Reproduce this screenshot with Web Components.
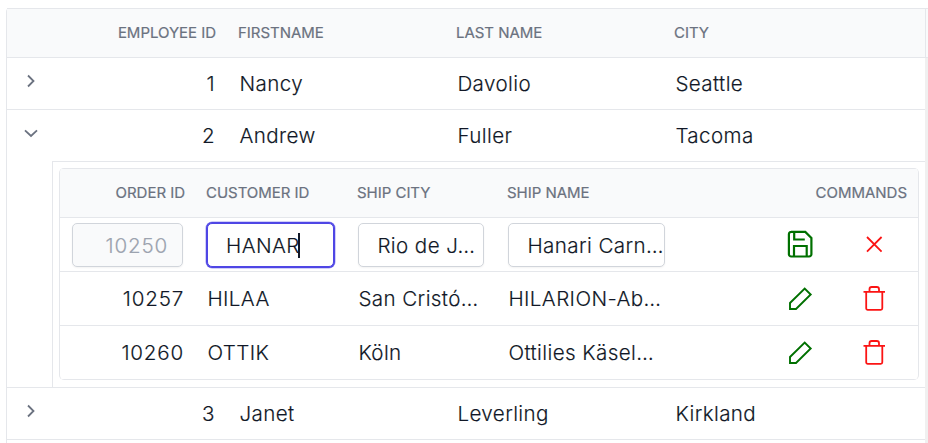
<!DOCTYPE html>
<html lang="en">
<head>
<meta charset="utf-8">
<title>Employees</title>
<style>
html,body{margin:0;height:443px;overflow:hidden;background:#fff;font-family:Inter,"Liberation Sans",sans-serif;color:#111827}
</style>
</head>
<body>
<employee-view></employee-view>
<script>
const define=(name,html)=>customElements.define(name,class extends HTMLElement{
  constructor(){super();this.attachShadow({mode:'open'}).innerHTML=html;}
});

define('grid-head',`<style>
:host{display:grid;grid-template-columns:var(--cols);align-items:center;height:48px;background:#f9fafb;border-top:1px solid #e5e7eb;border-bottom:1px solid #e5e7eb;color:#6b7280;font-size:15px;font-weight:400;-webkit-text-stroke:.2px currentColor;line-height:20px;letter-spacing:-.03px}
</style><slot></slot>`);

define('grid-row',`<style>
:host{display:grid;grid-template-columns:var(--cols);align-items:center;height:var(--row-h);border-bottom:1px solid #e5e7eb;font-size:20.6px;font-weight:300;-webkit-text-stroke:.15px currentColor;line-height:28px;letter-spacing:.4px}
:host([open]){border-bottom-color:transparent}
</style><slot></slot>`);

define('grid-cell',`<style>
:host{display:block;white-space:nowrap;min-width:0;padding-left:var(--inset,0)}
:host([num]){text-align:right;padding:0 var(--num-pad,0) 0 0;letter-spacing:var(--num-spacing,inherit)}
:host([end]){text-align:right;padding:0}
</style><slot></slot>`);

define('edit-box',`<style>
:host{display:flex;align-items:center;box-sizing:border-box;height:44px;width:var(--w);margin:1px 0 0 var(--ml,0);padding:1px 0 0 18.4px;border:1px solid #d1d5db;border-radius:5px;background:#fff;box-shadow:0 1px 2px rgba(0,0,0,.05);white-space:nowrap}
:host([disabled]){background:#f9fafb;color:#9ca3af;justify-content:flex-end;padding:1px 14px 0 0;letter-spacing:.8px}
:host([focused]){border-color:#4f46e5;box-shadow:0 0 0 1px #4f46e5,0 0 0 1.5px #a5a0f2;padding-left:18px}
i{display:none;width:2px;height:25px;background:#111827;margin-left:-2px}
:host([focused]) i{display:block}
</style><slot></slot><i></i>`);

const glyphs={
 right:'<path d="M9 6.5 14.5 12 9 17.5" stroke-width="1.8"/>',
 down:'<path d="M6 9.3 12 15 18 9.3" stroke-width="1.8"/>',
 save:'<path d="M3 .9H17.3L23.4 7V23.2a2.3 2.3 0 0 1-2.3 2.3H3.2A2.3 2.3 0 0 1 .9 23.2V3.2A2.3 2.3 0 0 1 3.2.9M6.2 1V8.5H16.8M6 25.5V15H18.7V25.5" stroke-width="2.2"/>',
 close:'<path d="M1 1 15.6 15.6M15.6 1 1 15.6" stroke-width="1.8"/>',
 edit:'<path d="M1 22V16L15.7 1.5 21.7 7.5 7 22Z" stroke-width="1.9"/>',
 trash:'<path d="M.5 5.8H22M3.2 6V22.3a1.5 1.5 0 0 0 1.5 1.5H17.8a1.5 1.5 0 0 0 1.5-1.5V6M6.5 5.5V3.2A2.2 2.2 0 0 1 8.7 1H13.8A2.2 2.2 0 0 1 16 3.2V5.5" stroke-width="1.8"/>'
};
const boxes={right:[24,24],down:[24,24],save:[24,27],close:[17,17],edit:[23,23],trash:[22.5,25]};
customElements.define('grid-icon',class extends HTMLElement{
  constructor(){super();this.attachShadow({mode:'open'});}
  connectedCallback(){
    const n=this.getAttribute('name'),[w,h]=boxes[n];
    this.shadowRoot.innerHTML=`<style>:host{display:flex;justify-content:center}svg{display:block;fill:none;stroke:currentColor;overflow:visible}</style><svg width="${w}" height="${h}" viewBox="0 0 ${w} ${h}">${glyphs[n]}</svg>`;
  }
});

define('row-toggle',`<style>:host{display:block;color:#6b7280;padding:0 0 6px 12px;width:24px}</style><slot></slot>`);

define('command-set',`<style>:host{display:grid;grid-template-columns:74px 74px;align-items:center;justify-content:end;margin-right:-4px;color:#007000}
::slotted(:last-child){color:#fb1414}</style><slot></slot>`);

define('order-grid',`<style>
:host{display:block;border:1px solid #e5e7eb;border-width:0 1px;border-radius:5px;overflow:hidden;--cols:125px 21px 151px 150px 200px 1fr 11px;--row-h:53px;--inset:1.4px;--num-pad:1px}
grid-row{--num-spacing:.8px}
grid-head{--inset:0px;--num-pad:0px}
</style>
<grid-head><grid-cell num>ORDER ID</grid-cell><span></span><grid-cell>CUSTOMER ID</grid-cell><grid-cell>SHIP CITY</grid-cell><grid-cell>SHIP NAME</grid-cell><grid-cell end>COMMANDS</grid-cell></grid-head>
<grid-row>
 <edit-box disabled style="--w:111px;--ml:12px">10250</edit-box><span></span>
 <edit-box focused style="--w:127px;--ml:1px">HANAR</edit-box>
 <edit-box style="--w:126px;--ml:1px">Rio de J…</edit-box>
 <edit-box style="--w:157px;--ml:1px">Hanari Carn…</edit-box>
 <command-set><grid-icon name="save"></grid-icon><grid-icon name="close"></grid-icon></command-set>
</grid-row>
<grid-row><grid-cell num>10257</grid-cell><span></span><grid-cell>HILAA</grid-cell><grid-cell>San Cristó…</grid-cell><grid-cell>HILARION-Ab…</grid-cell><command-set><grid-icon name="edit"></grid-icon><grid-icon name="trash"></grid-icon></command-set></grid-row>
<grid-row><grid-cell num>10260</grid-cell><span></span><grid-cell>OTTIK</grid-cell><grid-cell>Köln</grid-cell><grid-cell>Ottilies Käsel…</grid-cell><command-set><grid-icon name="edit"></grid-icon><grid-icon name="trash"></grid-icon></command-set></grid-row>`);

define('detail-panel',`<style>
:host{display:block;margin:-1px 0 0 45px;padding:6px 6px 7px;border:1px solid #e5e7eb;border-width:1px 0 0 1px}
</style><slot></slot>`);

define('employee-view',`<style>
:host{display:block;padding:8px 0 0 6px;height:435px;overflow:hidden}
.frame{border-left:1px solid #e5e7eb;border-top-left-radius:4px;height:450px;--cols:46px 163px 22px 218px 218px 1fr;--row-h:51px}
.body{display:grid;grid-template-columns:918px 3px;height:400px}
.track{background:#f0f0f0}
.top{display:grid;grid-template-columns:1fr 2px}
.gutter{background:#f9fafb;border:1px solid #e5e7eb;border-width:1px 0 1px 1px;margin-left:-1px}
.rows{--inset:1.4px;--num-pad:1px}
.end{border-top:1px solid #e5e7eb}
</style>
<div class="frame">
<div class="top"><grid-head><span></span><grid-cell num>EMPLOYEE ID</grid-cell><span></span><grid-cell>FIRSTNAME</grid-cell><grid-cell>LAST NAME</grid-cell><grid-cell>CITY</grid-cell></grid-head><div class="gutter"></div></div>
<div class="body"><div class="rows">
<grid-row><row-toggle><grid-icon name="right"></grid-icon></row-toggle><grid-cell num>1</grid-cell><span></span><grid-cell>Nancy</grid-cell><grid-cell>Davolio</grid-cell><grid-cell>Seattle</grid-cell></grid-row>
<grid-row open><row-toggle><grid-icon name="down"></grid-icon></row-toggle><grid-cell num>2</grid-cell><span></span><grid-cell>Andrew</grid-cell><grid-cell>Fuller</grid-cell><grid-cell>Tacoma</grid-cell></grid-row>
<detail-panel><order-grid></order-grid></detail-panel>
<div class="end"><grid-row><row-toggle><grid-icon name="right"></grid-icon></row-toggle><grid-cell num>3</grid-cell><span></span><grid-cell>Janet</grid-cell><grid-cell>Leverling</grid-cell><grid-cell>Kirkland</grid-cell></grid-row></div>
</div><div class="track"></div></div>
</div>`);
</script>
</body>
</html>
